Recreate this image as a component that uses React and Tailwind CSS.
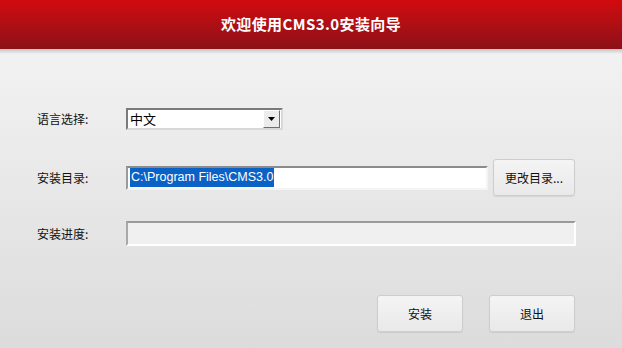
const cjk = { fontFamily: '"Noto Sans CJK SC", "Liberation Sans", sans-serif' };
const latin = { fontFamily: '"Liberation Sans", "Noto Sans CJK SC", sans-serif' };

const Label = ({ children }) => (
  <div className="w-[89px] shrink-0 text-[12px] text-[#111]" style={cjk}>
    {children}
  </div>
);

const Btn = ({ children, className = '' }) => (
  <button
    className={`flex items-center justify-center rounded-[3px] border border-[#cdcdcd] bg-gradient-to-b from-[#f4f4f4] to-[#e9e9e9] text-[12px] text-[#111] shadow-[0_1px_1px_rgba(0,0,0,0.08)] ${className}`}
    style={cjk}
  >
    {children}
  </button>
);

export default function App() {
  return (
    <div className="w-[622px] h-[348px] flex flex-col overflow-hidden bg-gradient-to-b from-[#f6f6f6] to-[#dcdcdc]">
      {/* Header */}
      <div className="h-[49px] shrink-0 flex items-center justify-center bg-gradient-to-b from-[#d20a0e] to-[#8c1016]">
        <h1 className="text-[15px] font-bold text-white tracking-[0.4px]" style={cjk}>
          欢迎使用CMS3.0安装向导
        </h1>
      </div>
      <div className="h-[5px] shrink-0 bg-gradient-to-b from-[#c4c4c4] to-[#f2f2f2]" />

      <div className="flex flex-col pl-[37px] pt-[54px]">
        {/* Language */}
        <div className="flex items-center h-[22px]">
          <Label>语言选择:</Label>
          <div className="relative w-[157px] h-[22px] bg-white border-2 border-t-[#7a7a7a] border-l-[#7a7a7a] border-r-[#d8d8d8] border-b-[#d8d8d8] flex items-center pl-[2px]">
            <span className="text-[13px] text-black" style={cjk}>中文</span>
            <div className="absolute right-[1px] top-[0px] w-[17px] h-[18px] bg-[#ececec] border border-t-white border-l-white border-r-[#6e6e6e] border-b-[#6e6e6e] flex items-center justify-center">
              <svg width="7" height="4" viewBox="0 0 7 4">
                <polygon points="0,0 7,0 3.5,4" fill="#000" />
              </svg>
            </div>
          </div>
        </div>

        {/* Directory */}
        <div className="flex items-center h-[37px] mt-[29px]">
          <Label>安装目录:</Label>
          <div className="w-[362px] h-[24px] bg-white border-2 border-t-[#8a8a8a] border-l-[#9a9a9a] border-r-[#f4f4f4] border-b-[#f4f4f4] flex items-center pl-[2px]">
            <span className="bg-[#0a62c6] text-white text-[12.5px] leading-[19px] px-[1px]" style={latin}>
              C:\Program Files\CMS3.0
            </span>
          </div>
          <Btn className="ml-[5px] w-[82px] h-[37px]">更改目录...</Btn>
        </div>

        {/* Progress */}
        <div className="flex items-center h-[25px] mt-[25px]">
          <Label>安装进度:</Label>
          <div className="w-[450px] h-[25px] bg-[#f0f0f0] border-2 border-t-[#9a9a9a] border-l-[#a8a8a8] border-r-white border-b-white" />
        </div>

        {/* Actions */}
        <div className="flex justify-end gap-[26px] mt-[49px] pr-[47px]">
          <Btn className="w-[86px] h-[37px]">安装</Btn>
          <Btn className="w-[86px] h-[37px]">退出</Btn>
        </div>
      </div>
    </div>
  );
}
